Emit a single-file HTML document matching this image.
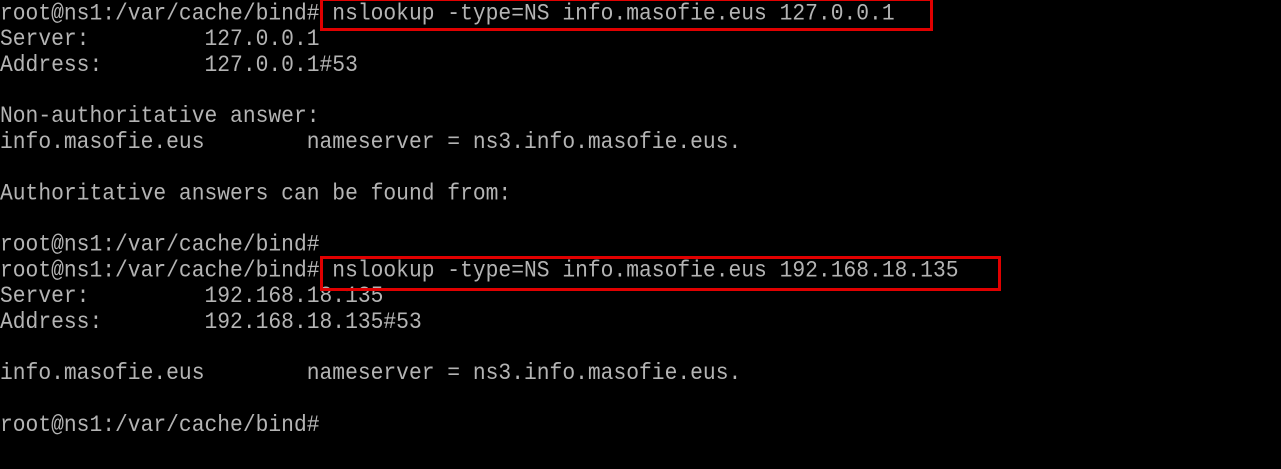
<!DOCTYPE html>
<html><head><meta charset="utf-8"><style>
html,body{margin:0;padding:0;background:#000;width:1281px;height:469px;overflow:hidden}
pre{margin:0;position:absolute;left:0;top:2px;font-family:"Liberation Mono",monospace;font-size:21.3px;line-height:23.8px;color:#b4b4b4;white-space:pre;transform:scaleY(1.08);transform-origin:0 0}
.b{position:absolute;border:3px solid #e00000;box-sizing:border-box}
</style></head><body>
<pre>root@ns1:/var/cache/bind# nslookup -type=NS info.masofie.eus 127.0.0.1
Server:         127.0.0.1
Address:        127.0.0.1#53

Non-authoritative answer:
info.masofie.eus        nameserver = ns3.info.masofie.eus.

Authoritative answers can be found from:

root@ns1:/var/cache/bind#
root@ns1:/var/cache/bind# nslookup -type=NS info.masofie.eus 192.168.18.135
Server:         192.168.18.135
Address:        192.168.18.135#53

info.masofie.eus        nameserver = ns3.info.masofie.eus.

root@ns1:/var/cache/bind#</pre>
<div class="b" style="left:320px;top:-2px;width:613px;height:33px"></div>
<div class="b" style="left:320px;top:256px;width:681px;height:35px"></div>
</body></html>
